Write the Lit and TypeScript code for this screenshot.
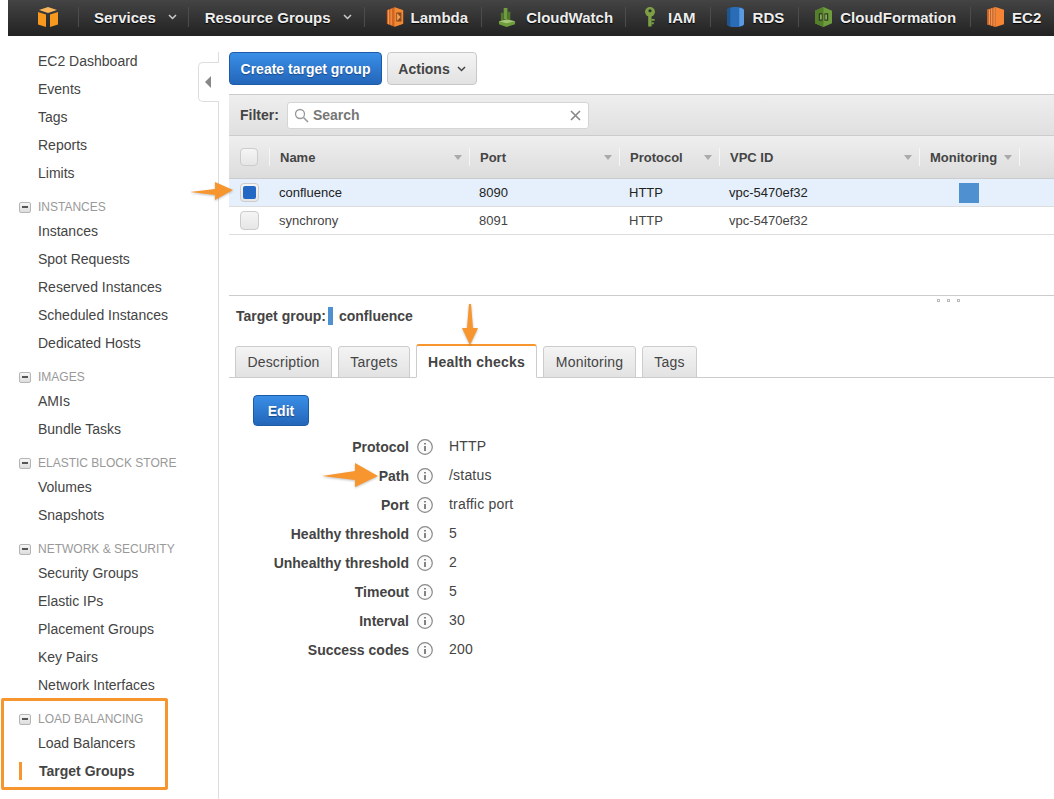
import { LitElement, html, css, svg } from 'lit';
import { customElement } from 'lit/decorators.js';

const SECTIONS = [
  { items: ['EC2 Dashboard', 'Events', 'Tags', 'Reports', 'Limits'] },
  { title: 'INSTANCES', items: ['Instances', 'Spot Requests', 'Reserved Instances', 'Scheduled Instances', 'Dedicated Hosts'] },
  { title: 'IMAGES', items: ['AMIs', 'Bundle Tasks'] },
  { title: 'ELASTIC BLOCK STORE', items: ['Volumes', 'Snapshots'] },
  { title: 'NETWORK & SECURITY', items: ['Security Groups', 'Elastic IPs', 'Placement Groups', 'Key Pairs', 'Network Interfaces'] },
  { title: 'LOAD BALANCING', items: ['Load Balancers', 'Target Groups'] },
];

const DETAILS = [
  ['Protocol', 'HTTP'],
  ['Path', '/status'],
  ['Port', 'traffic port'],
  ['Healthy threshold', '5'],
  ['Unhealthy threshold', '2'],
  ['Timeout', '5'],
  ['Interval', '30'],
  ['Success codes', '200'],
];

const COLUMNS = ['Name', 'Port', 'Protocol', 'VPC ID', 'Monitoring'];
const TABS = [
  { name: 'Description', width: 97 },
  { name: 'Targets', width: 72 },
  { name: 'Health checks', width: 121 },
  { name: 'Monitoring', width: 93 },
  { name: 'Tags', width: 55 },
];

const ICONS = {
  cube: svg`<svg width="20" height="21" viewBox="0 0 20 21">
    <path d="M10 0l9 3-9 3-9-3z" fill="#f9b45c"/><path d="M0 5l8 2.6V20l-8-2.6z" fill="#f7981f"/><path d="M20 5l-8 2.6V20l8-2.6z" fill="#f7981f"/></svg>`,
  lambda: svg`<svg width="18" height="20" viewBox="0 0 21 22" preserveAspectRatio="none">
    <path d="M1 3.5l9-3.2 10 3.2v15l-10 3.2-9-3.2z" fill="#d4641f"/><path d="M10 .3l10 3.2v15l-10 3.2z" fill="#f08a34"/>
    <path d="M3 3v16M6 2v18" stroke="#f6a75e" stroke-width="1"/><path d="M12 6h6v10h-6z" fill="#8c4a1c"/><path d="M13 7l4 4-4 4z" fill="#f3a25a"/></svg>`,
  cloudwatch: svg`<svg width="18" height="21" viewBox="0 0 19 22" preserveAspectRatio="none">
    <path d="M6 1h4v12H6z" fill="#6f9c3d"/><path d="M3 6h3v8H3zM10 5h3v9h-3z" fill="#4f7a2b"/>
    <path d="M1 15l8-2 9 2v3l-9 3-8-3z" fill="#6f9c3d"/><path d="M9 13l9 2-9 2-8-2z" fill="#a5c676"/></svg>`,
  iam: svg`<svg width="12" height="20" viewBox="0 0 12 21" preserveAspectRatio="none">
    <circle cx="6" cy="5" r="5" fill="#7ea044"/><circle cx="6" cy="4" r="1.6" fill="#2c2c2c"/>
    <path d="M4.2 9h3.4v11.5H4.2z" fill="#7ea044"/><path d="M7.6 12.5h3v2h-3zM7.6 16h2.2v2H7.6z" fill="#7ea044"/></svg>`,
  rds: svg`<svg width="17" height="20" viewBox="0 0 18 21" preserveAspectRatio="none">
    <path d="M0 3.5C0 1 4 0 9 0s9 1 9 3.5v14C18 20 14 21 9 21s-9-1-9-3.5z" fill="#2a6cb5"/>
    <path d="M13 .7c3 .5 5 1.400 5 2.800v14c0 1.400-2 2.300-5 2.800z" fill="#5a9ae0"/><path d="M0 3.500v14c0 1.200 1.400 2 3.500 2.600V.9C1.400 1.500 0 2.300 0 3.500z" fill="#1f558f"/></svg>`,
  cloudformation: svg`<svg width="17" height="20" viewBox="0 0 18 21" preserveAspectRatio="none">
    <path d="M9 0l9 4v13l-9 4-9-4V4z" fill="#6f9c3d"/><path d="M9 0v21l-9-4V4z" fill="#55802b"/>
    <path d="M4 6.500h4v8H4zM10 6.500h4v8h-4z" fill="#2f3d1f"/><path d="M5.500 8h1.500v5H5.500zM11 8h1.500v5H11z" fill="#a5c676"/></svg>`,
  ec2: svg`<svg width="17" height="20" viewBox="0 0 18 21" preserveAspectRatio="none">
    <path d="M0 3l9-3 9 3v15l-9 3-9-3z" fill="#f58534"/><path d="M0 3l9-3v21l-9-3z" fill="#c8611f"/>
    <path d="M2.500 2.500v16M5 1.700v17.600M7.500 1v19" stroke="#f7a870" stroke-width="1"/></svg>`,
};

const SERVICES = [
  { name: 'Lambda', cls: 'lambda', icon: ICONS.lambda },
  { name: 'CloudWatch', cls: 'cloudwatch', icon: ICONS.cloudwatch },
  { name: 'IAM', cls: 'iam', icon: ICONS.iam },
  { name: 'RDS', cls: 'rds', icon: ICONS.rds },
  { name: 'CloudFormation', cls: 'cloudformation', icon: ICONS.cloudformation },
  { name: 'EC2', cls: 'ec2', icon: ICONS.ec2 },
];

const chevron = svg`<svg class="chev" width="9" height="6" viewBox="0 0 9 6"><path d="M1 1l3.500 3.500L8 1" fill="none" stroke="currentColor" stroke-width="1.500"/></svg>`;

@customElement('app-root')
export class AppRoot extends LitElement {
  static styles = css`
    :host {
      display: block;
      position: relative;
      width: 1054px;
      height: 799px;
      overflow: hidden;
      background: #fff;
      font-family: 'Liberation Sans', Arial, sans-serif;
      font-size: 14px;
      color: #444;
    }

    .nav {
      margin-left: 8px;
      height: 36px;
      box-sizing: border-box;
      padding-bottom: 2px;
      display: flex;
      align-items: center;
      background: linear-gradient(#444, #222);
      color: #eee;
      font-size: 15px;
      font-weight: bold;
      text-shadow: 0 1px 1px #000;
      white-space: nowrap;
    }
    .nav-logo {
      display: flex;
      padding: 0 20px 0 30px;
    }
    .nav-menu {
      display: flex;
      align-items: center;
      height: 20px;
      border-left: 1px solid #4c4c4c;
    }
    .nav-menu.services { padding: 0 11px 0 15px; gap: 12px; }
    .nav-menu.groups { padding: 0 12px 0 16px; gap: 12px; }
    .nav-menu .chev { color: #ccc; }
    .nav-service {
      display: flex;
      align-items: center;
      height: 20px;
      border-left: 1px solid #4c4c4c;
    }
    .nav-service.lambda { padding: 0 13px 0 21px; gap: 7px; }
    .nav-service.cloudwatch { padding: 0 12px 0 16px; gap: 10px; }
    .nav-service.iam { padding: 0 14px 0 18px; gap: 12px; }
    .nav-service.rds { padding: 0 14px 0 16px; gap: 9px; }
    .nav-service.cloudformation { padding: 0 14px 0 16px; gap: 8px; }
    .nav-service.ec2 { padding: 0 13px 0 16px; gap: 8px; }

    .body {
      display: flex;
      height: 763px;
    }

    .side {
      position: relative;
      flex: none;
      width: 211px;
      margin-left: 8px;
      padding-top: 11px;
      box-sizing: border-box;
    }
    .side::after {
      content: '';
      position: absolute;
      right: 0;
      top: 16px;
      bottom: 0;
      width: 1px;
      background: #ddd;
    }
    .side-title {
      display: flex;
      align-items: center;
      height: 20px;
      margin-top: 10px;
      padding-left: 11px;
      gap: 7px;
      font-size: 12px;
      color: #999;
    }
    .minus {
      display: flex;
      align-items: center;
      justify-content: center;
      width: 10px;
      height: 9px;
      border: 1px solid #b5b5b5;
      border-radius: 2px;
      background: linear-gradient(#f6f6f6, #ddd);
    }
    .minus::before {
      content: '';
      width: 6px;
      height: 2px;
      background: #555;
    }
    .side-item {
      position: relative;
      height: 28px;
      line-height: 28px;
      padding-left: 30px;
    }
    .side-item.active {
      padding-left: 31px;
      font-weight: bold;
    }
    .side-item.active::before {
      content: '';
      position: absolute;
      left: 11px;
      top: 5px;
      width: 3px;
      height: 18px;
      background: #f7962f;
    }

    .collapse {
      position: absolute;
      left: 198px;
      top: 62px;
      width: 21px;
      height: 40px;
      display: flex;
      align-items: center;
      justify-content: center;
      box-sizing: border-box;
      padding-right: 2px;
      background: #fff;
      border: 1px solid #ddd;
      border-right: none;
      border-radius: 5px 0 0 5px;
    }
    .collapse::before {
      content: '';
      border: 6px solid transparent;
      border-right: 6px solid #888;
      border-left: none;
    }

    .main {
      flex: 1;
      min-width: 0;
      padding-left: 10px;
    }
    .actions {
      display: flex;
      gap: 5px;
      padding-top: 16px;
      height: 33px;
    }
    .btn {
      display: flex;
      align-items: center;
      justify-content: center;
      box-sizing: border-box;
      border-radius: 4px;
      font-weight: bold;
    }
    .btn.blue {
      border: 1px solid #1d5ba6;
      background: linear-gradient(#3a8ee6, #2366ba);
      color: #fff;
      text-shadow: 0 1px 1px #16488a;
    }
    .btn.create { width: 153px; }
    .btn.grey {
      width: 90px;
      gap: 7px;
      border: 1px solid #c8c8c8;
      background: linear-gradient(#f4f4f4, #e2e2e2);
    }
    .btn.edit {
      width: 56px;
      height: 31px;
    }

    .filter {
      display: flex;
      align-items: center;
      gap: 8px;
      height: 42px;
      box-sizing: border-box;
      margin-top: 9px;
      padding-left: 11px;
      border-top: 1px solid #ccc;
      border-bottom: 1px solid #ccc;
      background: linear-gradient(#eee, #e0e0e0);
      font-weight: bold;
    }
    .search {
      display: flex;
      align-items: center;
      width: 302px;
      height: 27px;
      box-sizing: border-box;
      padding: 0 7px 0 6px;
      gap: 4px;
      background: #fff;
      border: 1px solid #d5d5d5;
      border-radius: 3px;
      color: #777;
    }
    .search span { flex: 1; }

    .grid {
      display: grid;
      grid-template-columns: 40px 200px 150px 100px 200px 100px 1fr;
      align-items: center;
    }
    .head {
      height: 42px;
      border-bottom: 1px solid #ccc;
      background: linear-gradient(#efefef, #dcdcdc);
      font-size: 13px;
      font-weight: bold;
    }
    .head-cell {
      display: flex;
      align-items: center;
      justify-content: space-between;
      height: 18px;
      padding: 0 7px 0 10px;
      border-left: 1px solid #f6f6f6;
    }
    .head-cell::after {
      content: '';
      border: 4px solid transparent;
      border-top: 5px solid #aaa;
      border-bottom: none;
    }
    .head-cell.end::after {
      display: none;
    }
    .row {
      height: 27px;
      border-bottom: 1px solid #ddd;
      font-size: 13px;
    }
    .row.selected {
      background: #e5f0fc;
      color: #222;
    }
    .row > div {
      padding-left: 10px;
    }
    .check {
      width: 18px;
      height: 18px;
      margin-left: 11px;
      box-sizing: border-box;
      border: 1px solid #ccc;
      border-radius: 4px;
      background: linear-gradient(#f5f5f5, #e6e6e6);
    }
    .row > .check {
      padding: 2px;
      width: 19px;
      height: 19px;
    }
    .check.on::before {
      content: '';
      display: block;
      height: 100%;
      border-radius: 2px;
      background: #2368c4;
    }
    .row > .monitor {
      padding-left: 40px;
    }
    .monitor i {
      display: block;
      width: 20px;
      height: 20px;
      background: #4f90d0;
    }

    .split {
      position: relative;
      height: 60px;
      border-bottom: 1px solid #ccc;
    }
    .grip {
      position: absolute;
      left: 708px;
      top: 64px;
      display: flex;
      gap: 7px;
    }
    .grip i {
      width: 3px;
      height: 3px;
      border: 1px solid #bbb;
      box-sizing: border-box;
    }

    .target {
      display: flex;
      align-items: center;
      height: 18px;
      margin-top: 11px;
      padding-left: 7px;
      font-weight: bold;
      white-space: pre;
    }
    .target i {
      width: 5px;
      height: 18px;
      margin: 0 6px 0 2px;
      background: #4f90d0;
    }

    .tabs {
      display: flex;
      align-items: flex-end;
      height: 35px;
      margin-top: 17px;
      padding-left: 6px;
      gap: 6px;
      border-bottom: 1px solid #ccc;
    }
    .tab {
      display: flex;
      align-items: center;
      justify-content: center;
      height: 32px;
      margin-bottom: -1px;
      box-sizing: border-box;
      border: 1px solid #ccc;
      border-radius: 3px 3px 0 0;
      background: linear-gradient(#f4f4f4, #e2e2e2);
      letter-spacing: 0.2px;
    }
    .tab.active {
      height: 34px;
      padding-top: 1px;
      background: #fff;
      border-top: 2px solid #f7962f;
      border-bottom-color: #fff;
      font-weight: bold;
    }

    .pane {
      padding: 17px 0 0 24px;
    }
    .details {
      display: grid;
      grid-template-columns: 180px 16px 1fr;
      grid-auto-rows: 29px;
      column-gap: 8px;
      align-items: center;
      margin-top: 6px;
    }
    .details .label {
      text-align: right;
      font-weight: bold;
      white-space: nowrap;
    }
    .details .info {
      display: flex;
    }
    .details .value {
      padding-left: 8px;
      margin-top: -2px;
      letter-spacing: 0.2px;
    }

    .mark {
      position: absolute;
      border: 3px solid #f7962f;
      border-radius: 2px;
      left: 1px;
      top: 698px;
      width: 161px;
      height: 86px;
    }
    .arrow {
      position: absolute;
      filter: drop-shadow(0 1px 1px rgba(0, 0, 0, 0.25));
    }
    .arrow.row-arrow { left: 188px; top: 180px; }
    .arrow.tab-arrow { left: 460px; top: 302px; }
    .arrow.path-arrow { left: 320px; top: 461px; }
  `;

  private renderSide() {
    return html`<aside class="side">
      ${SECTIONS.map(
        (s) => html`
          ${s.title ? html`<div class="side-title"><span class="minus"></span>${s.title}</div>` : ''}
          ${s.items.map((item) => html`<div class="side-item ${item === 'Target Groups' ? 'active' : ''}">${item}</div>`)}
        `
      )}
    </aside>`;
  }

  private renderNav() {
    return html`<header class="nav">
      <span class="nav-logo">${ICONS.cube}</span>
      <span class="nav-menu services">Services ${chevron}</span>
      <span class="nav-menu groups">Resource Groups ${chevron}</span>
      ${SERVICES.map((s) => html`<span class="nav-service ${s.cls}">${s.icon}${s.name}</span>`)}
    </header>`;
  }

  private renderTable() {
    return html`
      <div class="grid head">
        <div class="check"></div>
        ${COLUMNS.map((c) => html`<div class="head-cell">${c}</div>`)}
        <div class="head-cell end"></div>
      </div>
      <div class="grid row selected">
        <div class="check on"></div>
        <div>confluence</div><div>8090</div><div>HTTP</div><div>vpc-5470ef32</div>
        <div class="monitor"><i></i></div>
      </div>
      <div class="grid row">
        <div class="check"></div>
        <div>synchrony</div><div>8091</div><div>HTTP</div><div>vpc-5470ef32</div>
      </div>
    `;
  }

  private infoIcon() {
    return svg`<svg width="16" height="16" viewBox="0 0 16 16">
      <circle cx="8" cy="8" r="7.300" fill="#fafafa" stroke="#888" stroke-width="1.200"/>
      <path d="M8 4v1.600M8 7v5" stroke="#666" stroke-width="1.600"/></svg>`;
  }

  render() {
    return html`
      ${this.renderNav()}
      <div class="body">
        ${this.renderSide()}
        <main class="main">
          <div class="actions">
            <div class="btn blue create">Create target group</div>
            <div class="btn grey">Actions ${chevron}</div>
          </div>
          <div class="filter">
            Filter:
            <div class="search">
              <svg width="15" height="15" viewBox="0 0 15 15"><circle cx="6" cy="6" r="4.500" fill="none" stroke="#999" stroke-width="1.300"/><path d="M9.500 9.500L14 14" stroke="#999" stroke-width="1.600"/></svg>
              <span>Search</span>
              <svg width="11" height="11" viewBox="0 0 11 11"><path d="M1 1l9 9M10 1l-9 9" stroke="#888" stroke-width="1.600"/></svg>
            </div>
          </div>
          ${this.renderTable()}
          <div class="split">
            <div class="grip"><i></i><i></i><i></i></div>
          </div>
          <div class="target">Target group:<i></i>confluence</div>
          <div class="tabs">
            ${TABS.map(
              (t) => html`<div class="tab ${t.name === 'Health checks' ? 'active' : ''}" style="width:${t.width}px">${t.name}</div>`
            )}
          </div>
          <div class="pane">
            <div class="btn blue edit">Edit</div>
          </div>
          <div class="details">
            ${DETAILS.map(
              ([k, v]) => html`<div class="label">${k}</div><div class="info">${this.infoIcon()}</div><div class="value">${v}</div>`
            )}
          </div>
        </main>
      </div>
      <div class="collapse"></div>
      <div class="mark"></div>
      <svg class="arrow row-arrow" width="46" height="22" viewBox="0 0 46 22"><path d="M2 12L27 9V2l18 8-18 10v-5z" fill="#f7962f"/></svg>
      <svg class="arrow tab-arrow" width="20" height="44" viewBox="0 0 20 44"><path d="M9 2h2l2 24h5l-8 17-8-17h5z" fill="#f7962f"/></svg>
      <svg class="arrow path-arrow" width="60" height="28" viewBox="0 0 60 28"><path d="M2 15L35 10V2l23 13-23 11v-7z" fill="#f7962f"/></svg>
    `;
  }
}
